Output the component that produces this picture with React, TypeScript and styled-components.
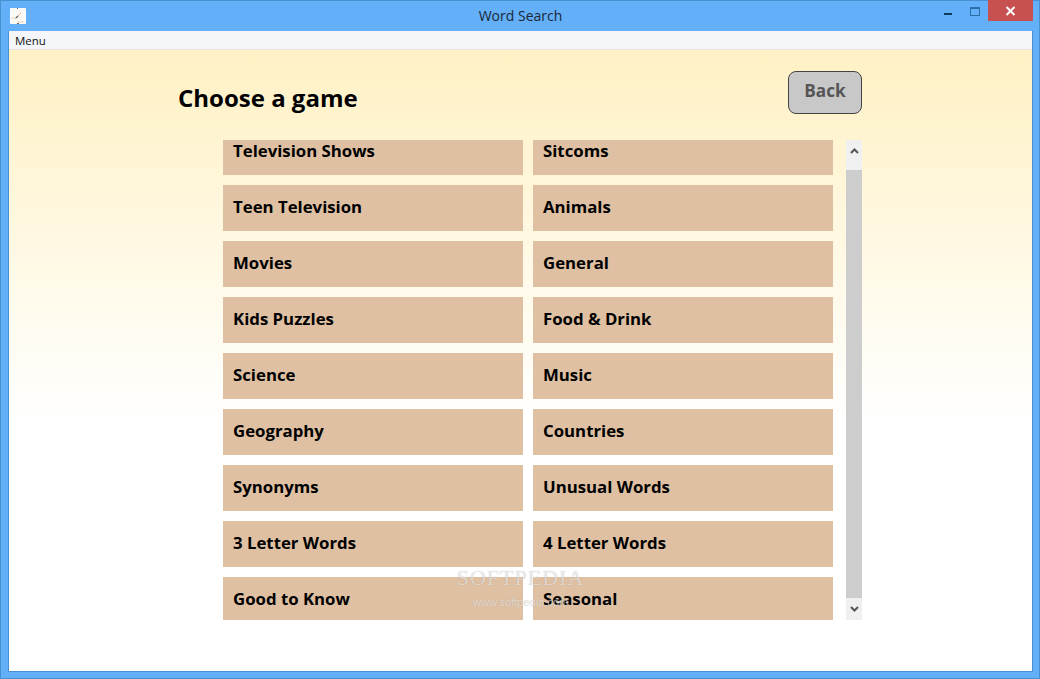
import styled, { createGlobalStyle } from 'styled-components';

const leftGames = [
	'Television Shows',
	'Teen Television',
	'Movies',
	'Kids Puzzles',
	'Science',
	'Geography',
	'Synonyms',
	'3 Letter Words',
	'Good to Know',
];
const rightGames = [
	'Sitcoms',
	'Animals',
	'General',
	'Food & Drink',
	'Music',
	'Countries',
	'Unusual Words',
	'4 Letter Words',
	'Seasonal',
];
const games = leftGames.flatMap((name, idx) => [name, rightGames[idx]]);

const Global = createGlobalStyle`
	html, body {
		margin: 0;
		padding: 0;
		overflow: hidden;
	}
`;

export default function App() {
	return (
		<>
			<Global />
			<Window>
				<TitleBar>
					<AppIcon>
						<svg width='16' height='16' viewBox='0 0 16 16'>
							<rect width='16' height='16' rx='1' fill='#fbfaf6' />
							<path d='M5 11l6-6' stroke='#e6bd94' strokeWidth='1' />
							<path d='M6 10l2-2' stroke='#666' strokeWidth='1.5' />
							<path d='M1 10h4M7 14h7' stroke='#ecd2b4' strokeWidth='1' />
							<path d='M7 15.5h2M7 .5h1' stroke='#666' strokeWidth='1' />
						</svg>
					</AppIcon>
					<Caption>Word Search</Caption>
					<Controls>
						<Minimize />
						<Maximize />
						<CloseButton>
							<svg width='11' height='10' viewBox='0 0 11 10'>
								<path d='M1.5 1l8 8M9.5 1l-8 8' stroke='#fff' strokeWidth='2' />
							</svg>
						</CloseButton>
					</Controls>
				</TitleBar>
				<Client>
					<MenuBar>Menu</MenuBar>
					<Content>
						<Header>
							<Heading>Choose a game</Heading>
							<BackButton>Back</BackButton>
						</Header>
						<ListArea>
							<GameViewport>
								<GameGrid>
									{games.map((name) => (
										<GameTile key={name}>{name}</GameTile>
									))}
								</GameGrid>
							</GameViewport>
							<ScrollBar>
								<ScrollArrow>
									<svg width='9' height='6' viewBox='0 0 9 6'>
										<path d='M1 5l3.5-3.5L8 5' fill='none' stroke='#555' strokeWidth='2' />
									</svg>
								</ScrollArrow>
								<ScrollThumb />
								<ScrollArrow>
									<svg width='9' height='6' viewBox='0 0 9 6'>
										<path d='M1 1l3.5 3.5L8 1' fill='none' stroke='#555' strokeWidth='2' />
									</svg>
								</ScrollArrow>
							</ScrollBar>
						</ListArea>
						<Watermark>
							<WatermarkName>SOFTPEDIA</WatermarkName>
							<WatermarkUrl>www.softpedia.com</WatermarkUrl>
						</Watermark>
					</Content>
				</Client>
			</Window>
		</>
	);
}

const Window = styled.div`
	width: 1040px;
	height: 679px;
	box-sizing: border-box;
	display: flex;
	flex-direction: column;
	background: #63aff8;
	border: 1px solid #4a8fd0;
	padding: 0 6px 6px 7px;
	font-family: 'Open Sans', sans-serif;
`;

const TitleBar = styled.div`
	position: relative;
	height: 30px;
	flex: none;
	display: flex;
	align-items: center;
	justify-content: center;
`;

const AppIcon = styled.div`
	position: absolute;
	left: 2px;
	top: 6px;
	width: 16px;
	height: 16px;
`;

const Caption = styled.div`
	font-size: 14px;
	color: #1c2836;
	margin-top: -1px;
`;

const Controls = styled.div`
	position: absolute;
	right: 0;
	top: -1px;
	display: flex;
	align-items: flex-start;
`;

const Minimize = styled.div`
	width: 8px;
	height: 2px;
	margin: 13px 18px 0 0;
	background: #0f3a60;
`;

const Maximize = styled.div`
	width: 8px;
	height: 6px;
	margin: 7px 8px 0 0;
	border: 1px solid #2c6ea8;
	border-top-width: 2px;
`;

const CloseButton = styled.div`
	width: 45px;
	height: 21px;
	background: #c75050;
	display: flex;
	align-items: center;
	justify-content: center;
`;

const Client = styled.div`
	flex: 1;
	min-height: 0;
	display: flex;
	flex-direction: column;
	border: 1px solid #4a8fd0;
	border-top: none;
	background: #fff;
`;

const MenuBar = styled.div`
	height: 19px;
	flex: none;
	box-sizing: border-box;
	padding-left: 6px;
	background: #f4f6f9;
	border-bottom: 1px solid #e4e4e4;
	font-size: 11.5px;
	line-height: 20px;
	color: #111;
`;

const Content = styled.div`
	position: relative;
	flex: 1;
	min-height: 0;
	padding: 0 170px 0 169px;
	background: linear-gradient(to bottom, #fff1c4 0%, #ffffff 60%);
`;

const Header = styled.div`
	height: 90px;
	display: flex;
	justify-content: space-between;
	align-items: flex-start;
`;

const Heading = styled.h1`
	margin: 31px 0 0;
	font-size: 24px;
	line-height: 34px;
	font-weight: 700;
	color: #000;
`;

const BackButton = styled.button`
	width: 74px;
	height: 43px;
	margin-top: 21px;
	padding: 0 0 4px;
	background: #c8c8c8;
	border: 1px solid #444;
	border-radius: 8px;
	font-family: inherit;
	font-size: 17.2px;
	font-weight: 700;
	color: #555;
`;

const ListArea = styled.div`
	display: flex;
	justify-content: flex-end;
	gap: 13px;
	height: 480px;
`;

const GameViewport = styled.div`
	width: 610px;
	overflow: hidden;
`;

const GameGrid = styled.div`
	display: grid;
	grid-template-columns: 300px 300px;
	grid-auto-rows: 46px;
	gap: 10px;
	margin-top: -11px;
`;

const GameTile = styled.div`
	display: flex;
	align-items: center;
	padding: 0 0 3px 10px;
	box-sizing: border-box;
	background: #dfc0a2;
	font-size: 16.8px;
	font-weight: 700;
	color: #000;
`;

const ScrollBar = styled.div`
	width: 16px;
	display: flex;
	flex-direction: column;
	background: #f0f0f0;
`;

const ScrollArrow = styled.div`
	height: 22px;
	flex: none;
	display: flex;
	align-items: center;
	justify-content: center;
`;

const ScrollThumb = styled.div`
	flex: 1;
	margin-top: 8px;
	background: #cdcdcd;
`;

const Watermark = styled.div`
	position: absolute;
	left: 444px;
	top: 516px;
	width: 135px;
	text-align: center;
	pointer-events: none;
	color: rgba(255, 255, 255, 0.55);
	text-shadow: 0 0 1px rgba(120, 110, 100, 0.4);
	font-family: 'Liberation Serif', serif;
`;

const WatermarkName = styled.div`
	font-size: 22px;
	line-height: 24px;
	letter-spacing: 1px;
`;

const WatermarkUrl = styled.div`
	font-size: 11.5px;
	line-height: 14px;
	margin-top: 5px;
	font-family: 'Liberation Sans', sans-serif;
	letter-spacing: -0.2px;
`;
